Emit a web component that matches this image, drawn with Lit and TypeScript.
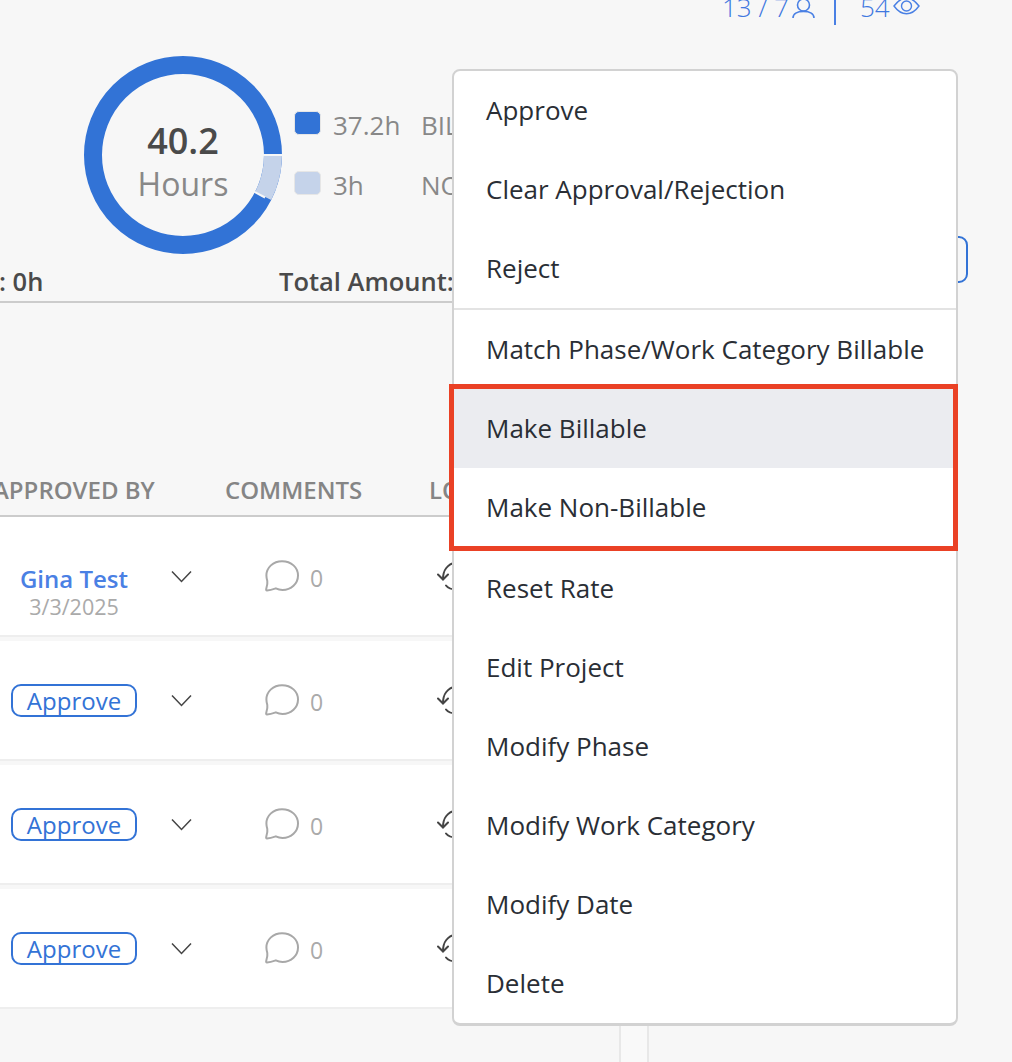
import { LitElement, html, css, svg } from "lit";
import { customElement } from "lit/decorators.js";

const MENU: { label: string; divider?: boolean; active?: boolean }[] = [
  { label: "Approve" },
  { label: "Clear Approval/Rejection" },
  { label: "Reject", divider: true },
  { label: "Match Phase/Work Category Billable" },
  { label: "Make Billable", active: true },
  { label: "Make Non-Billable", divider: true },
  { label: "Reset Rate" },
  { label: "Edit Project" },
  { label: "Modify Phase" },
  { label: "Modify Work Category" },
  { label: "Modify Date" },
  { label: "Delete" },
];

const chevron = svg`<path d="M1 1.5 L10.5 11.5 L20 1.5" fill="none" stroke="#444" stroke-width="1.5"/>`;
const bubble = svg`<path d="M2 30.6 C1.2 30.6 1 30 1.2 29 C2.2 25.8 2.8 23.5 2.3 21 C1.6 18.5 1.4 17.2 1.4 15.5 C1.4 7.6 8.2 1.2 17 1.2 C26.4 1.2 33 7.6 33 15.5 C33 23.6 26.2 30 17.5 30 C15 30 12.8 29.4 10.8 28.4 C8 29.4 5 30.4 2 30.6 Z" fill="none" stroke="#a8a8a8" stroke-width="2"/>`;
const history = svg`<path d="M6 18 C6 10 10 3 19 1.5" fill="none" stroke="#444" stroke-width="2" stroke-linecap="round"/><path d="M9 24.5 C11 27 14.5 28.5 19 28.5" fill="none" stroke="#444" stroke-width="2" stroke-linecap="round"/><path d="M1 13.5 L6 18.5 L11 13.5" fill="none" stroke="#444" stroke-width="2" stroke-linecap="round"/>`;

@customElement("app-root")
export class AppRoot extends LitElement {
  static styles = css`
    :host {
      display: block;
      position: relative;
      width: 1012px;
      height: 1062px;
      overflow: hidden;
      background: #f7f7f7;
      font-family: "Open Sans", "Noto Sans", sans-serif;
    }
    .page { display: flex; flex-direction: column; height: 100%; }
    .metrics {
      display: flex;
      align-items: center;
      height: 34px;
      margin: -10px 0 32px 722px;
      color: #3f78e0;
      font-size: 26px;
      font-weight: 300;
      line-height: 34px;
      white-space: nowrap;
    }
    .metrics svg { flex: none; }
    .person { margin-left: 3px; }
    .pipe { flex: none; width: 2px; height: 36px; margin: 0 24px 0 19px; background: #4a80e4; }
    .eye { margin: 0 0 2px 3px; }
    .chart-row { display: flex; height: 198px; padding-left: 84px; }
    .donut { display: grid; flex: none; width: 198px; height: 198px; }
    .donut > * { grid-area: 1 / 1; }
    .center {
      display: flex;
      flex-direction: column;
      align-items: center;
      justify-content: center;
      padding-top: 12px;
    }
    .total { color: #4a4a4a; font-size: 36px; font-weight: 600; line-height: 46px; }
    .unit { color: #888; font-size: 32px; line-height: 42px; margin-top: -1px; }
    .legend {
      display: grid;
      grid-template-columns: 26px 101px 120px;
      row-gap: 31px;
      align-content: start;
      margin: 54px 0 0 12px;
      color: #888;
      font-size: 26px;
      line-height: 28px;
      white-space: nowrap;
    }
    .swatch {
      box-sizing: border-box;
      width: 27px;
      height: 24px;
      margin-top: 1px;
      border: 1px solid #e6e6e6;
      border-radius: 5px;
    }
    .legend .val { padding: 1px 0 0 13px; }
    .legend .label { padding-top: 1px; font-weight: 500; }
    .action {
      box-sizing: border-box;
      flex: none;
      width: 120px;
      height: 47px;
      margin: 180px 44px 0 auto;
      border: 2px solid #3373d6;
      border-radius: 9px;
    }
    .totals {
      display: flex;
      height: 34px;
      margin-top: 10px;
      color: #4a4a4a;
      font-size: 25.5px;
      font-weight: 600;
      line-height: 34px;
      white-space: nowrap;
    }
    .totals .a { width: 280px; margin-left: -1px; }
    .rule { flex: none; width: 470px; height: 2px; margin-top: 3px; background: #ccc; }
    .head {
      display: flex;
      align-items: center;
      flex: none;
      box-sizing: border-box;
      width: 620px;
      height: 47px;
      margin-top: 167px;
      border-bottom: 2px solid #ccc;
      color: #858585;
      font-size: 24px;
      font-weight: 600;
      white-space: nowrap;
      padding-bottom: 7px;
    }
    .head .h1 { width: 232px; margin-left: -7px; flex: none; }
    .head .h2 { width: 204px; flex: none; }
    .rows { display: flex; flex-direction: column; width: 620px; }
    .row {
      box-sizing: border-box;
      display: grid;
      grid-template-columns: 148px 66px 223px 1fr;
      align-items: center;
      height: 120px;
      margin-bottom: 4px;
      background: #fff;
      border-bottom: 2px solid #eee;
    }
    .who { display: flex; flex-direction: column; align-items: center; }
    .who.signed { padding-top: 34px; }
    .person-name { color: #4a80e4; font-size: 24px; font-weight: 600; line-height: 28px; }
    .date { color: #aaa; font-size: 21.5px; line-height: 28px; }
    .pill {
      box-sizing: border-box;
      width: 126px;
      height: 33px;
      border: 2px solid #3373d6;
      border-radius: 10px;
      color: #3373d6;
      font-size: 24px;
      line-height: 29px;
      text-align: center;
    }
    .cell { display: flex; align-items: center; }
    .chev { justify-content: center; }
    .comment { gap: 10px; padding-left: 51px; color: #aaa; font-size: 23px; }
    .comment span { margin-top: 4px; }
    .hist { margin-top: 0; }
    .rail {
      flex: 1;
      box-sizing: border-box;
      width: 30px;
      margin-left: 619px;
      background: #f9f9f9;
      border-left: 2px solid #e8e8e8;
      border-right: 2px solid #e8e8e8;
    }
    .menu {
      position: absolute;
      left: 452px;
      top: 69px;
      box-sizing: border-box;
      width: 506px;
      height: 957px;
      background: #fff;
      border: 2px solid #d2d2d2;
      border-bottom-width: 3px;
      border-radius: 8px;
      color: #2a2e35;
      font-size: 26px;
    }
    .item {
      display: flex;
      align-items: center;
      box-sizing: border-box;
      height: 79px;
      padding: 0 0 1px 32px;
      white-space: nowrap;
    }
    .item.active { background: #ebecf0; }
    .sep { height: 2px; background: #e3e3e3; }
    .callout {
      position: absolute;
      left: 449px;
      top: 384px;
      box-sizing: border-box;
      width: 509px;
      height: 167px;
      border: 5px solid #ea4125;
    }
  `;

  private renderRow(name?: string) {
    return html`<div class="row">
      ${name
        ? html`<div class="who signed">
            <span class="person-name">${name}</span><span class="date">3/3/2025</span>
          </div>`
        : html`<div class="who"><span class="pill">Approve</span></div>`}
      <div class="cell chev"><svg width="21" height="13" viewBox="0 0 21 13">${chevron}</svg></div>
      <div class="cell comment"><svg width="35" height="32" viewBox="0 0 35 32">${bubble}</svg><span>0</span></div>
      <div class="cell hist"><svg width="34" height="31" viewBox="0 0 34 31">${history}</svg></div>
    </div>`;
  }

  render() {
    return html`<div class="page">
        <div class="metrics">
          <span>13 / 7</span>
          <svg class="person" width="23" height="24" viewBox="0 0 23 24">
            <circle cx="11.5" cy="10" r="6" fill="none" stroke="#4a80e4" stroke-width="1.6" />
            <path d="M1 23 C1 19 5 16.4 11.5 16.4 C18 16.4 22 19 22 23" fill="none" stroke="#4a80e4" stroke-width="1.6" />
          </svg>
          <span class="pipe"></span>
          <span>54</span>
          <svg class="eye" width="27" height="18" viewBox="0 0 27 18">
            <path d="M1 9 C5 3.5 9 1.2 13.5 1.2 C18 1.2 22 3.5 26 9 C22 14.5 18 16.8 13.5 16.8 C9 16.8 5 14.5 1 9 Z" fill="none" stroke="#4a80e4" stroke-width="1.4" />
            <circle cx="13.5" cy="9" r="5" fill="none" stroke="#4a80e4" stroke-width="1.4" />
          </svg>
        </div>
        <div class="chart-row">
          <div class="donut">
            <svg width="198" height="198" viewBox="0 0 198 198">
              <circle cx="99" cy="99" r="90" fill="none" stroke="#3273d6" stroke-width="18" />
              <path d="M189 99 A90 90 0 0 1 179.2 140" fill="none" stroke="#c5d3ea" stroke-width="18" />
              <path d="M171 99 L207 99" stroke="#f7f7f7" stroke-width="2" />
              <path d="M162.5 131.6 L181 141.5" stroke="#f7f7f7" stroke-width="2" />
            </svg>
            <div class="center">
              <span class="total">40.2</span>
              <span class="unit">Hours</span>
            </div>
          </div>
          <div class="legend">
            <span class="swatch" style="background:#3273d6"></span>
            <span class="val">37.2h</span>
            <span class="label">BILLABLE</span>
            <span class="swatch" style="background:#c5d3ea"></span>
            <span class="val">3h</span>
            <span class="label">NON-BILLABLE</span>
          </div>
          <div class="action"></div>
        </div>
        <div class="totals">
          <span class="a">: 0h</span>
          <span>Total Amount: $0</span>
        </div>
        <div class="rule"></div>
        <div class="head">
          <span class="h1">APPROVED BY</span>
          <span class="h2">COMMENTS</span>
          <span>LOG</span>
        </div>
        <div class="rows">
          ${this.renderRow("Gina Test")} ${this.renderRow()} ${this.renderRow()} ${this.renderRow()}
        </div>
        <div class="rail"></div>
      </div>
      <div class="menu">
        ${MENU.map(
          (m) => html`<div class="item ${m.active ? "active" : ""}">${m.label}</div>
            ${m.divider ? html`<div class="sep"></div>` : ""}`
        )}
      </div>
      <div class="callout"></div>`;
  }
}
